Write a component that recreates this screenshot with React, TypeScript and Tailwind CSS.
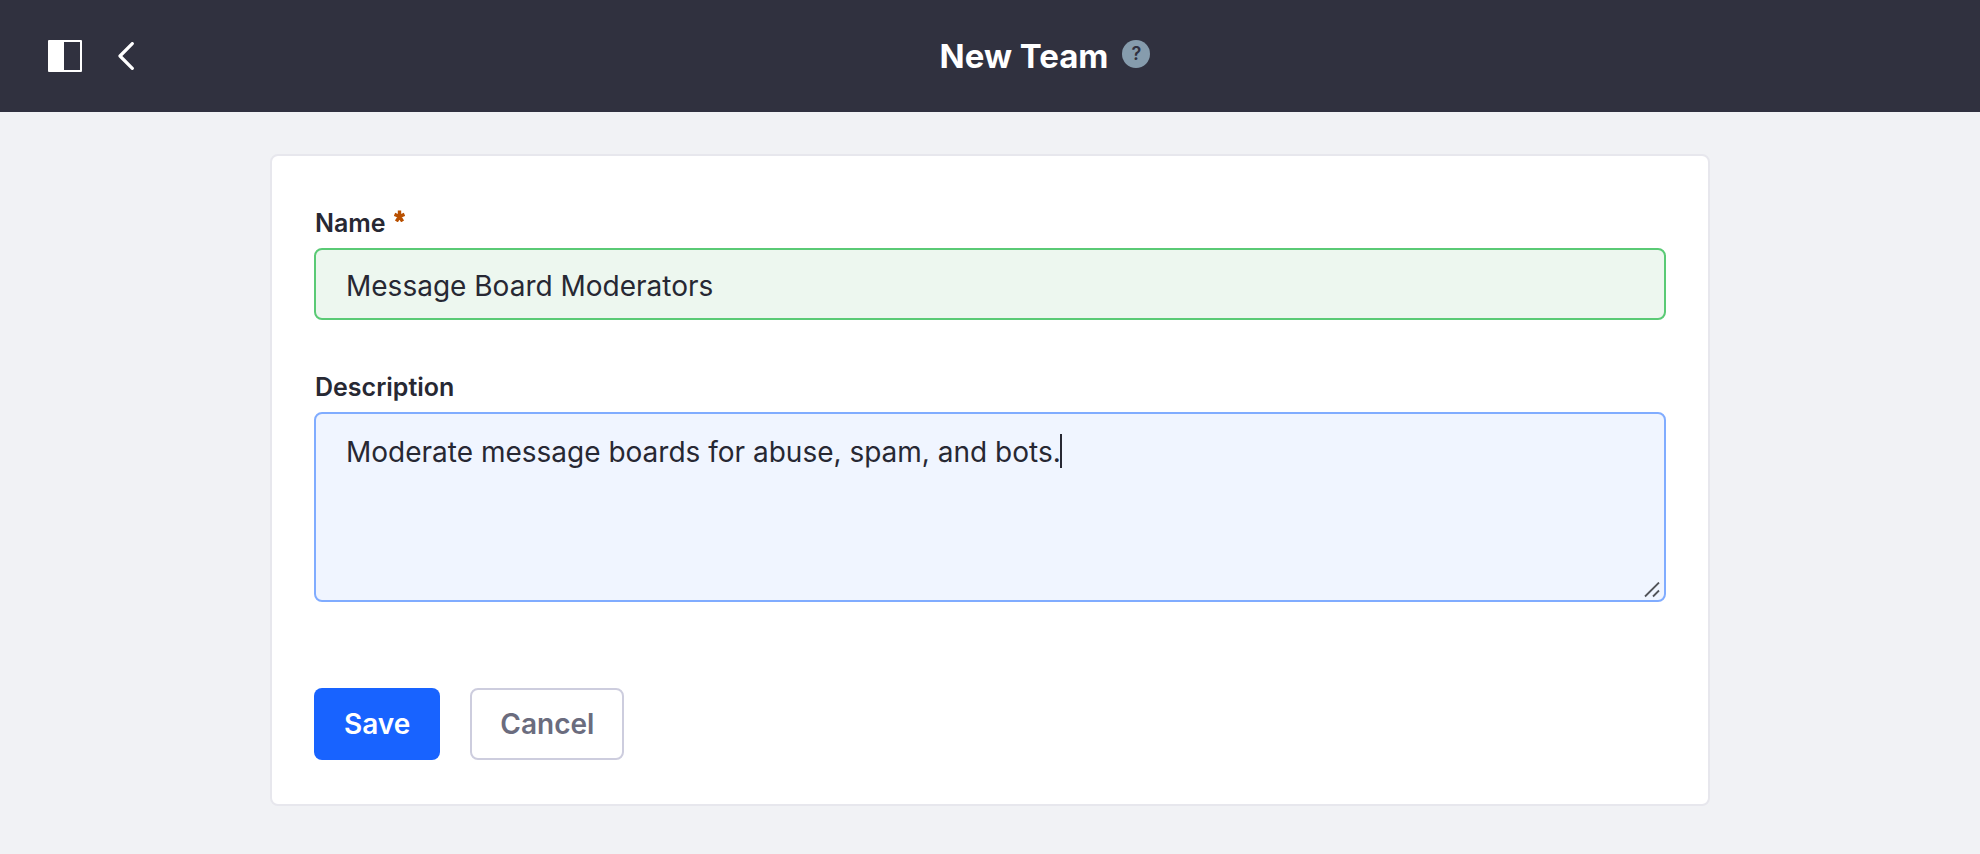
import React, { useState } from 'react';

interface FieldProps {
  id: string;
  label: string;
  required?: boolean;
  children: React.ReactNode;
}

function Field({ id, label, required, children }: FieldProps) {
  return (
    <div className="flex flex-col">
      <label htmlFor={id} className="flex items-start pl-px text-[25px] leading-[30px] font-semibold text-[#272833]">
        {label}
        {required && (
          <svg className="mt-0.5 ml-2 text-[#b95000]" width="11" height="12" viewBox="0 0 11 12" fill="none" stroke="currentColor" strokeWidth="3.4" role="img" aria-label="Required">
            <path d="M5.5 .5V6.5M.5 4.4l5 2.1M10.5 4.4l-5 2.1M2.4 11.4l3.1-4.9M8.6 11.4 5.5 6.5" />
          </svg>
        )}
      </label>
      {children}
    </div>
  );
}

function ControlBar() {
  return (
    <header className="flex h-28 items-center gap-6 bg-[#30313f] px-12 text-white">
      <div className="flex items-center gap-9">
        <button type="button" aria-label="Toggle product menu">
          <svg width="34" height="32" viewBox="0 0 34 32" fill="currentColor">
            <path fillRule="evenodd" d="M1 0h32a1 1 0 0 1 1 1v30a1 1 0 0 1-1 1H1a1 1 0 0 1-1-1V1a1 1 0 0 1 1-1Zm15 2v28h16V2H16Z" />
          </svg>
        </button>
        <button type="button" aria-label="Back">
          <svg width="16" height="28" viewBox="0 0 16 28" fill="none" stroke="currentColor" strokeWidth="3.2" strokeLinecap="round" strokeLinejoin="round">
            <path d="M14.3 1.6 2 14l12.3 12.4" />
          </svg>
        </button>
      </div>
      <div className="flex flex-1 items-center justify-center gap-3.5">
        <h1 className="text-[33px] leading-10 font-bold">New Team</h1>
        <button
          type="button"
          aria-label="Help"
          className="mb-1 flex size-7 items-center justify-center rounded-full bg-[#869cad] text-lg leading-none font-semibold text-[#30313f]"
        >
          ?
        </button>
      </div>
    </header>
  );
}

export default function App() {
  const [name, setName] = useState('Message Board Moderators');
  const [description, setDescription] = useState('Moderate message boards for abuse, spam, and bots.');

  return (
    <div className="min-h-screen bg-[#f1f2f5] font-['Inter',sans-serif] text-[#272833]">
      <ControlBar />

      <main className="px-6 py-[42px]">
        <form
          className="mx-auto flex max-w-[1440px] flex-col rounded-lg border-2 border-[#e7e7ed] bg-white px-[42px] pt-[52px] pb-11"
          onSubmit={(e) => e.preventDefault()}
        >
          <Field id="name" label="Name" required>
            <input
              id="name"
              type="text"
              value={name}
              onChange={(e) => setName(e.target.value)}
              className="mt-2.5 h-[72px] w-full rounded-lg border-2 border-[#5aca75] bg-[#edf7ef] px-[30px] pt-1 text-[28px] leading-10 outline-none"
            />
          </Field>

          <div className="mt-[52px]">
            <Field id="description" label="Description">
              <div className="relative mt-2.5">
                <textarea
                  id="description"
                  value={description}
                  onChange={(e) => setDescription(e.target.value)}
                  className="block h-[190px] w-full resize-none rounded-lg border-2 border-[#80acff] bg-[#f0f5ff] px-[30px] py-[18px] text-[28px] leading-10 outline-none"
                />
                {/* text cursor */}
                <span className="absolute top-[22px] left-[746px] h-[34px] w-0.5 bg-[#272833]" />
                {/* resize grip */}
                <svg className="absolute right-1.5 bottom-1" width="16" height="16" viewBox="0 0 16 16" fill="none" stroke="#525459" strokeWidth="1.8">
                  <path d="M1 14.5 15 .5M9 14.5l6-6" />
                </svg>
              </div>
            </Field>
          </div>

          <div className="mt-[86px] flex gap-[30px]">
            <button type="submit" className="h-[72px] rounded-lg bg-[#1863ff] px-[30px] text-[28px] leading-10 font-semibold text-white">
              Save
            </button>
            <button
              type="button"
              className="h-[72px] rounded-lg border-2 border-[#cdcdde] bg-white px-7 text-[28px] leading-10 font-semibold text-[#6b6c7e]"
            >
              Cancel
            </button>
          </div>
        </form>
      </main>
    </div>
  );
}
